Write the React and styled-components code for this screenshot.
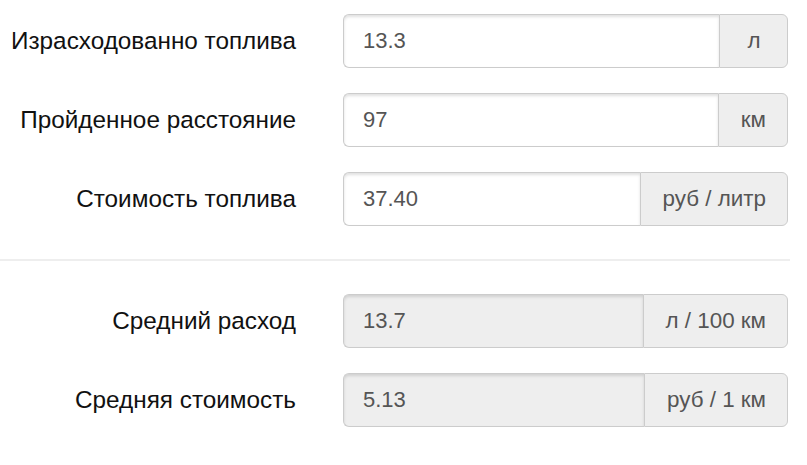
import React from 'react';
import styled, { createGlobalStyle } from 'styled-components';

const GlobalStyle = createGlobalStyle`
  body {
    margin: 0;
    background: #fff;
    font-family: "Liberation Sans", Arial, Helvetica, sans-serif;
  }
`;

const Form = styled.form`
  padding-top: 14px;
  width: 807px;
`;

const Row = styled.div`
  display: grid;
  grid-template-columns: 296px 445px;
  column-gap: 47px;
  align-items: center;
  margin-bottom: 25px;
`;

const Label = styled.label`
  text-align: right;
  font-size: 24.3px;
  color: #111;
  line-height: 54px;
  white-space: nowrap;
`;

const InputGroup = styled.div`
  display: flex;
  height: 54px;
`;

const Field = styled.input`
  flex: 1;
  min-width: 0;
  box-sizing: border-box;
  height: 54px;
  padding: 0 19px;
  border: 1px solid #ccc;
  border-right: 0;
  border-radius: 6px 0 0 6px;
  background: ${p => (p.readOnly ? '#eee' : '#fff')};
  box-shadow: inset 0 2px 3px rgba(0, 0, 0, 0.12);
  font-family: inherit;
  font-size: 22px;
  color: #555;
  outline: none;
`;

const Addon = styled.span`
  display: flex;
  align-items: center;
  justify-content: center;
  box-sizing: border-box;
  min-width: 69px;
  padding: 0 21px 0 22px;
  border: 1px solid #ccc;
  border-radius: 0 6px 6px 0;
  background: #eee;
  font-size: 22.4px;
  color: #555;
  white-space: nowrap;
`;

/* sibling margins collapse with the row's 25px, so 33px wins */
const Divider = styled.hr`
  width: 790px;
  margin: 33px 0 33px;
  border: 0;
  border-top: 2px solid #eee;
`;

const inputs = [
  { label: 'Израсходованно топлива', value: '13.3', unit: 'л' },
  { label: 'Пройденное расстояние', value: '97', unit: 'км' },
  { label: 'Стоимость топлива', value: '37.40', unit: 'руб / литр' },
];

const results = [
  { label: 'Средний расход', value: '13.7', unit: 'л / 100 км' },
  { label: 'Средняя стоимость', value: '5.13', unit: 'руб / 1 км' },
];

const FieldRow = ({ label, value, unit, readOnly }) => (
  <Row>
    <Label>{label}</Label>
    <InputGroup>
      <Field defaultValue={value} readOnly={readOnly} />
      <Addon>{unit}</Addon>
    </InputGroup>
  </Row>
);

export default function App() {
  return (
    <>
      <GlobalStyle />
      <Form>
        {inputs.map(r => (
          <FieldRow key={r.label} {...r} />
        ))}
        <Divider />
        {results.map(r => (
          <FieldRow key={r.label} {...r} readOnly />
        ))}
      </Form>
    </>
  );
}
